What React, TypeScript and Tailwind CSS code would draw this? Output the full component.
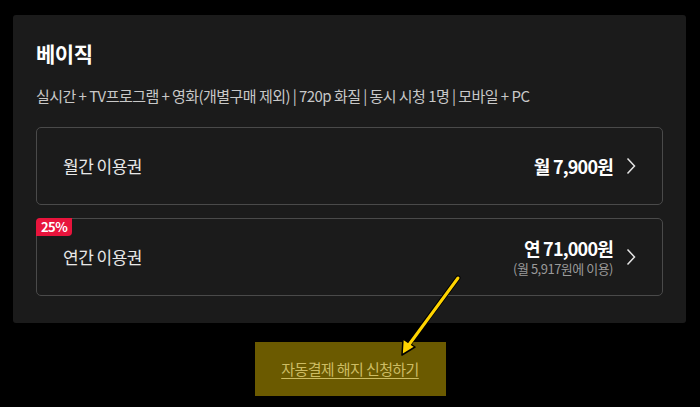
import React from "react";

const plans = [
  { name: "월간 이용권", price: "월 7,900원", sub: "", badge: "" },
  { name: "연간 이용권", price: "연 71,000원", sub: "(월 5,917원에 이용)", badge: "25%" },
];

function Chevron() {
  return (
    <svg width="10" height="18" viewBox="0 0 10 18" fill="none" className="shrink-0">
      <polyline points="1.5,1.5 8.5,9 1.5,16.5" stroke="#e5e5e5" strokeWidth="1.5" />
    </svg>
  );
}

export default function App() {
  return (
    <div
      className="relative w-[700px] h-[407px] bg-black pt-[15px] px-[13px] overflow-hidden"
      style={{ fontFamily: '"Noto Sans CJK KR", "Noto Sans", sans-serif' }}
    >
      <div className="w-[673px] h-[308px] rounded-[3px] bg-[#1b1b1b] pt-[24px] px-[23px]">
        <h2 className="text-[21px] leading-[28px] font-bold text-white tracking-[-0.5px]">베이직</h2>
        <p className="mt-[19px] text-[15px] leading-[20px] text-[#c8c8c8] tracking-[-0.55px]">
          실시간 + TV프로그램 + 영화(개별구매 제외) | 720p 화질 | 동시 시청 1명 | 모바일 + PC
        </p>
        <div className="mt-[21px] flex flex-col gap-[13px]">
          {plans.map((p) => (
            <div
              key={p.name}
              className="relative h-[78px] rounded-[5px] border border-[#4a4a4a] flex items-center justify-between pl-[26px] pr-[26px]"
            >
              {p.badge && (
                <span className="absolute left-[-1px] top-[-1px] h-[18px] px-[5px] rounded-tl-[4px] rounded-br-[4px] bg-[#e8143c] text-white text-[13px] leading-[18px] font-bold tracking-[-0.6px]">
                  {p.badge}
                </span>
              )}
              <span className="text-[17px] text-[#e8e8e8] tracking-[-0.5px]">{p.name}</span>
              <div className="flex items-center gap-[13px]">
                <div className="flex flex-col items-end">
                  <span className="text-[18px] leading-[24px] font-bold text-white tracking-[-0.8px]">{p.price}</span>
                  {p.sub && (
                    <span className="text-[13px] leading-[18px] text-[#9a9a9a] tracking-[-0.5px]">{p.sub}</span>
                  )}
                </div>
                <Chevron />
              </div>
            </div>
          ))}
        </div>
      </div>
      <div className="flex justify-center mt-[19px]">
        <div className="relative w-[191px] h-[54px] flex items-center justify-center">
          <a className="text-[15px] text-[#aaaaaa] underline underline-offset-[3px] tracking-[-0.6px] cursor-pointer">
            자동결제 해지 신청하기
          </a>
          <div className="absolute inset-0 bg-[#ffd700]/[0.42] pointer-events-none" />
        </div>
      </div>
      <svg className="absolute left-0 top-0 pointer-events-none" width="700" height="407">
        <line x1="458" y1="278" x2="409" y2="344" stroke="#000" strokeWidth="5" strokeLinecap="round" />
        <polygon points="402,355 403,339 415,347" fill="#ffd400" stroke="#000" strokeWidth="1.5" strokeLinejoin="round" />
        <line x1="458" y1="278" x2="408" y2="346" stroke="#ffd400" strokeWidth="3" strokeLinecap="round" />
      </svg>
    </div>
  );
}
